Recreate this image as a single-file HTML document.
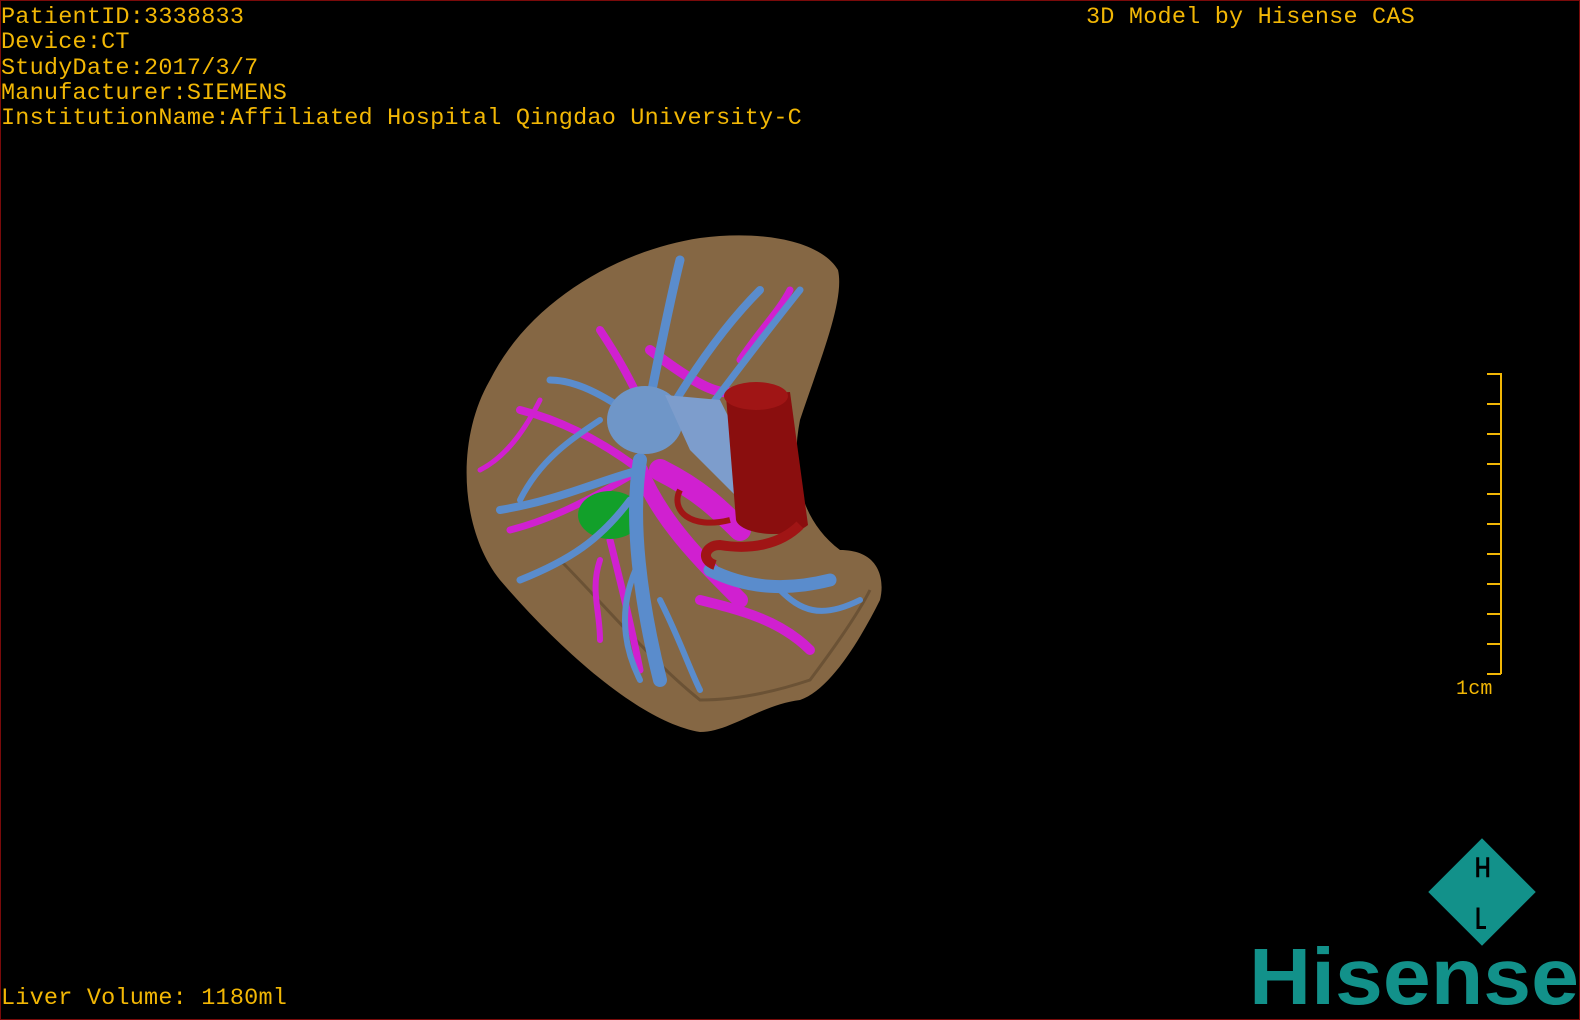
<!DOCTYPE html>
<html><head><style>
html,body{margin:0;padding:0;background:#000;}
body{width:1580px;height:1020px;position:relative;overflow:hidden;font-family:"Liberation Mono",monospace;color:#f2b705;}
.frame{position:absolute;left:0;top:0;width:1578px;height:1018px;border:1px solid #7a0a0a;}
.t{position:absolute;font-size:23.5px;line-height:25.3px;white-space:pre;letter-spacing:0.2px;}
</style></head><body>
<div class="frame"></div>
<div class="t" style="left:1px;top:5px">PatientID:3338833
Device:CT
StudyDate:2017/3/7
Manufacturer:SIEMENS
InstitutionName:Affiliated Hospital Qingdao University-C</div>
<div class="t" style="left:1086px;top:5px">3D Model by Hisense CAS</div>
<div class="t" style="left:1px;top:986px">Liver Volume: 1180ml</div>
<div class="t" style="left:1456px;top:677px;font-size:20px">1cm</div>
<svg width="1580" height="1020" style="position:absolute;left:0;top:0">
<g stroke="#f2b705" stroke-width="2">
<line x1="1501" y1="373" x2="1501" y2="674"/>
<line x1="1487" y1="374" x2="1501" y2="374"/>
<line x1="1487" y1="404" x2="1501" y2="404"/>
<line x1="1487" y1="434" x2="1501" y2="434"/>
<line x1="1487" y1="464" x2="1501" y2="464"/>
<line x1="1487" y1="494" x2="1501" y2="494"/>
<line x1="1487" y1="524" x2="1501" y2="524"/>
<line x1="1487" y1="554" x2="1501" y2="554"/>
<line x1="1487" y1="584" x2="1501" y2="584"/>
<line x1="1487" y1="614" x2="1501" y2="614"/>
<line x1="1487" y1="644" x2="1501" y2="644"/>
<line x1="1487" y1="674" x2="1501" y2="674"/>
</g>
<path d="M700 732 C640 722 560 650 500 580 C460 530 455 440 490 380 C530 300 620 250 700 238 C760 230 820 240 838 270 C845 300 820 360 800 420 C790 470 800 520 840 550 C880 550 885 580 880 600 C860 640 830 690 800 700 C760 705 730 732 700 732 Z" fill="#8c6d48" opacity="0.95"/>
<path d="M560 560 C600 600 650 660 700 700 C740 700 780 690 810 680 C840 640 860 610 870 590" stroke="#6b5235" stroke-width="3" fill="none"/>
<g stroke="#d020d0" stroke-linecap="round" fill="none">
<path d="M740 600 C700 560 660 520 640 470" stroke-width="16"/>
<path d="M660 470 C700 490 720 510 740 530" stroke-width="22"/>
<path d="M640 470 C600 440 560 420 520 410" stroke-width="8"/>
<path d="M640 470 C590 500 550 520 510 530" stroke-width="7"/>
<path d="M610 540 C620 580 630 620 640 670" stroke-width="7"/>
<path d="M700 600 C740 610 780 620 810 650" stroke-width="10"/>
<path d="M650 350 C690 380 720 400 740 390" stroke-width="10"/>
<path d="M740 360 C760 330 780 310 790 290" stroke-width="7"/>
<path d="M600 330 C620 360 630 380 640 400" stroke-width="8"/>
<path d="M540 400 C520 440 500 460 480 470" stroke-width="5"/>
<path d="M600 560 C590 590 600 610 600 640" stroke-width="6"/>
</g>
<ellipse cx="610" cy="515" rx="32" ry="24" fill="#12a02a"/>
<g stroke="#5a8ccc" stroke-linecap="round" fill="none">
<path d="M640 460 C630 520 640 600 660 680" stroke-width="14"/>
<path d="M640 470 C600 480 560 500 500 510" stroke-width="8"/>
<path d="M630 500 C600 540 570 560 520 580" stroke-width="7"/>
<path d="M640 560 C620 600 620 640 640 680" stroke-width="6"/>
<path d="M660 600 C680 640 690 670 700 690" stroke-width="6"/>
<path d="M640 420 C610 400 580 380 550 380" stroke-width="7"/>
<path d="M650 400 C660 350 670 300 680 260" stroke-width="9"/>
<path d="M670 410 C700 360 730 320 760 290" stroke-width="8"/>
<path d="M700 420 C730 380 760 340 800 290" stroke-width="7"/>
<path d="M710 570 C750 590 790 590 830 580" stroke-width="13"/>
<path d="M780 590 C800 610 820 620 860 600" stroke-width="6"/>
<path d="M600 420 C570 440 540 460 520 500" stroke-width="6"/>
</g>
<ellipse cx="645" cy="420" rx="38" ry="34" fill="#6f96c8"/>
<path d="M665 395 L720 400 L760 480 L740 500 L690 450 Z" fill="#7d9dcc"/>
<path d="M726 396 L736 520 C740 535 790 540 808 525 L790 392 Z" fill="#8a0e0e"/>
<ellipse cx="756" cy="396" rx="32" ry="14" fill="#a01515"/>
<path d="M800 525 C780 545 750 550 720 545 C705 545 700 560 715 565" stroke="#a01515" stroke-width="10" fill="none"/>
<path d="M680 490 C670 510 690 530 730 520" stroke="#a01515" stroke-width="6" fill="none"/>
<g transform="translate(1482 892) rotate(45)">
<rect x="-38" y="-38" width="76" height="76" fill="#12918a"/>
<path d="M-22 -28 L-22 -8 M-12 -28 L-12 -8 M-22 -18 L-12 -18" stroke="#000" stroke-width="3" fill="none" transform="rotate(-45 -17 -18)"/>
<path d="M14 8 L14 28 L22 28" stroke="#000" stroke-width="3" fill="none" transform="rotate(-45 18 18)"/>
</g>
<text x="1249" y="1004" font-family="Liberation Sans,sans-serif" font-weight="bold" font-size="80" fill="#12918a" textLength="330" lengthAdjust="spacingAndGlyphs">Hisense</text>
</svg>
</body></html>
